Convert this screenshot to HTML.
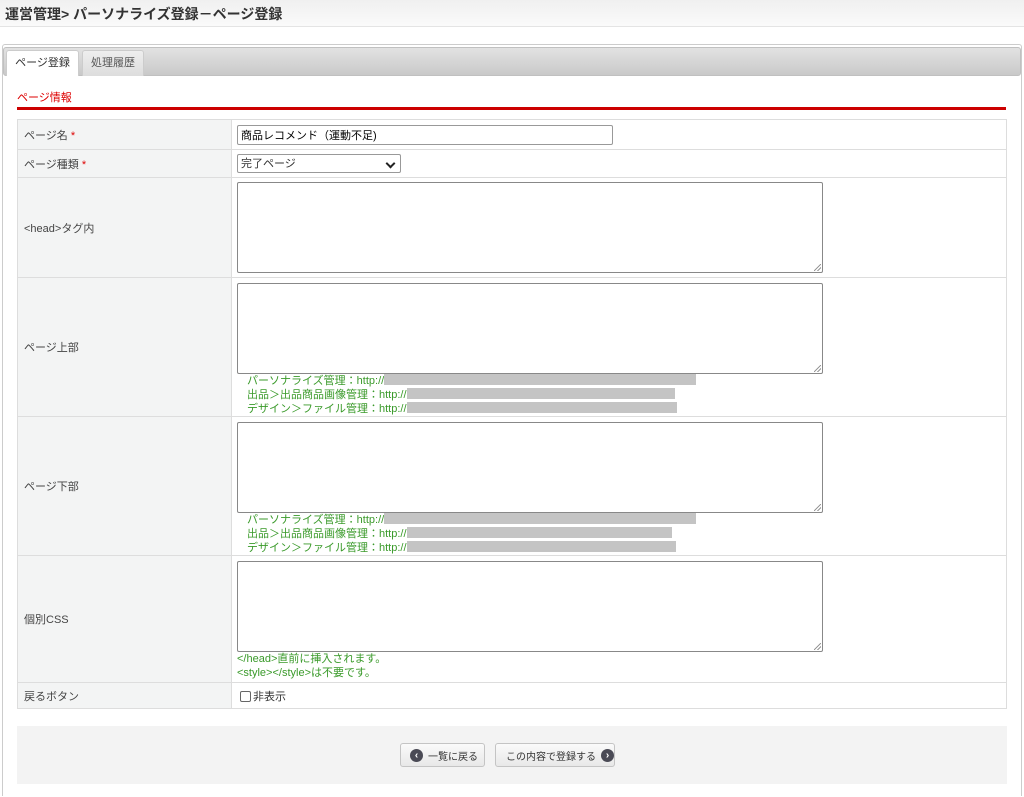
<!DOCTYPE html>
<html><head><meta charset="utf-8"><style>
*{box-sizing:border-box;margin:0;padding:0}
html,body{width:1024px;height:797px;overflow:hidden}
body{background:#fff;font-family:"Liberation Sans","Noto Sans CJK JP",sans-serif;font-size:11px;color:#333;position:relative}
.hdr{position:absolute;left:0;top:0;width:1024px;height:27px;background:linear-gradient(#f0f0f0,#fafafa);border-bottom:1px solid #e4e4e4}
.hdr h1{font-size:14px;font-weight:bold;color:#333;position:absolute;left:5px;top:4px;letter-spacing:0}
.frame{position:absolute;left:2px;top:44px;width:1020px;height:752px;border:1px solid #ccc;border-bottom:none;border-radius:3px 3px 0 0}
.tabbar{position:absolute;left:3px;top:47px;width:1018px;height:29px;background:linear-gradient(#e2e2e2,#c9c9c9);border:1px solid #c0c0c0;border-radius:3px}
.tab{position:absolute;top:50px;height:26px;border:1px solid #ccc;border-bottom:none;border-radius:3px 3px 0 0;font-size:11px;text-align:center;line-height:24px}
.t1{left:6px;width:73px;background:#fff;color:#333}
.t2{left:82px;width:62px;background:linear-gradient(#eee,#ddd);color:#555}
.sec{position:absolute;left:17px;top:89px;color:#d00;font-size:11px}
.redline{position:absolute;left:17px;top:107px;width:989px;height:3px;background:#c00}
table{position:absolute;left:17px;top:119px;width:990px;border-collapse:collapse}
td{border:1px solid #ddd;vertical-align:middle;padding:0}
td.l{width:214px;background:#f3f4f4;padding-left:6px;color:#444}
td.v{padding-left:5px}
.req{color:#d00}
input.t{width:376px;height:20px;border:1px solid #999;border-radius:2px;font-size:11px;padding-left:3px;font-family:inherit;display:block}
.sel{width:164px;height:19px;border:1px solid #999;border-radius:2px;font-size:11px;padding-left:3px;line-height:19px;position:relative}
.sel:after{content:"";position:absolute;right:6px;top:5px;width:5px;height:5px;border-right:2px solid #222;border-bottom:2px solid #222;transform:rotate(45deg)}
.ta{width:586px;height:91px;border:1px solid #888;border-radius:2px;position:relative}
.ta:after{content:"";position:absolute;right:1px;bottom:1px;width:7px;height:7px;background:linear-gradient(135deg,transparent 45%,#999 45%,#999 55%,transparent 55%,transparent 70%,#999 70%,#999 80%,transparent 80%)}
.note{color:#3a9a2a;font-size:11px;line-height:13px;padding-left:10px}
.note2{color:#3a9a2a;font-size:11px;line-height:14px}
.g{display:inline-block;height:11px;background:#c4c4c4;vertical-align:-1px}
.foot{position:absolute;left:17px;top:726px;width:990px;height:58px;background:#f3f3f3}
.btn{position:absolute;top:743px;height:24px;border:1px solid #c4c4c4;border-radius:3px;background:linear-gradient(#fafafa,#e8e8e8);font-size:10px;color:#333;display:flex;align-items:center;gap:5px}
.ic{display:flex;align-items:center;justify-content:center;width:13px;height:13px;border-radius:50%;background:#4a4a55;color:#fff;font-size:10px;font-weight:bold}
.cb{display:inline-block;width:11px;height:11px;border:1px solid #666;border-radius:2px;vertical-align:-2px;margin-right:2px}
</style></head><body>
<div class="hdr"><h1>運営管理&gt; パーソナライズ登録－ページ登録</h1></div>
<div class="frame"></div>
<div class="tabbar"></div>
<div class="tab t1">ページ登録</div>
<div class="tab t2">処理履歴</div>
<div class="sec">ページ情報</div>
<div class="redline"></div>
<table>
<tr style="height:30px"><td class="l">ページ名 <span class="req">*</span></td><td class="v"><input class="t" value="商品レコメンド（運動不足)"></td></tr>
<tr style="height:28px"><td class="l">ページ種類 <span class="req">*</span></td><td class="v"><div class="sel">完了ページ</div></td></tr>
<tr style="height:100px"><td class="l">&lt;head&gt;タグ内</td><td class="v"><div class="ta"></div></td></tr>
<tr style="height:139px"><td class="l">ページ上部</td><td class="v" style="padding-top:4px"><div class="ta"></div>
<div class="note">パーソナライズ管理：http://<span class="g" style="width:312px"></span><br>出品＞出品商品画像管理：http://<span class="g" style="width:268px"></span><br>デザイン＞ファイル管理：http://<span class="g" style="width:270px"></span></div></td></tr>
<tr style="height:139px"><td class="l">ページ下部</td><td class="v" style="padding-top:4px"><div class="ta"></div>
<div class="note">パーソナライズ管理：http://<span class="g" style="width:312px"></span><br>出品＞出品商品画像管理：http://<span class="g" style="width:265px"></span><br>デザイン＞ファイル管理：http://<span class="g" style="width:269px"></span></div></td></tr>
<tr style="height:127px"><td class="l">個別CSS</td><td class="v" style="padding-top:2px"><div class="ta"></div>
<div class="note2">&lt;/head&gt;直前に挿入されます。<br>&lt;style&gt;&lt;/style&gt;は不要です。</div></td></tr>
<tr style="height:26px"><td class="l">戻るボタン</td><td class="v" style="padding-left:8px"><span class="cb"></span>非表示</td></tr>
</table>
<div class="foot"></div>
<div class="btn" style="left:400px;width:85px;padding-left:9px"><span class="ic">‹</span>一覧に戻る</div>
<div class="btn" style="left:495px;width:120px;padding-left:10px">この内容で登録する<span class="ic">›</span></div>
</body></html>
